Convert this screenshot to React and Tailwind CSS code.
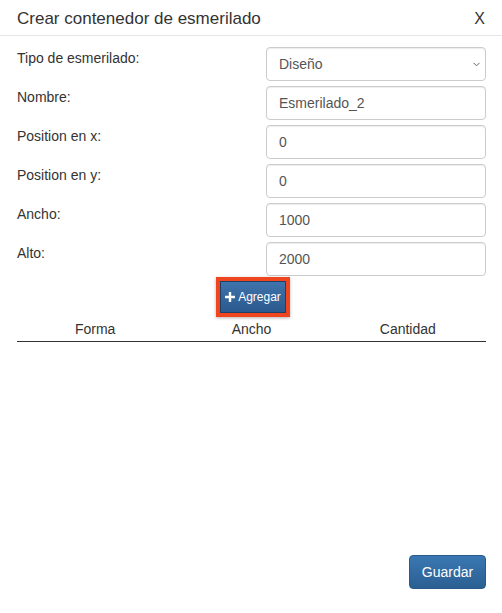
import React from 'react';

const fields = [
  { label: 'Nombre:', value: 'Esmerilado_2' },
  { label: 'Position en x:', value: '0' },
  { label: 'Position en y:', value: '0' },
  { label: 'Ancho:', value: '1000' },
  { label: 'Alto:', value: '2000' },
];

function Row({ label, children }) {
  return (
    <div className="flex items-start justify-between h-[34px]">
      <label className="pt-[1px] text-[14px] leading-[20px] text-[#333]">{label}</label>
      {children}
    </div>
  );
}

export default function App() {
  return (
    <div
      className="h-[613px] w-[502px] bg-white flex flex-col text-[#333]"
      style={{ fontFamily: '"Liberation Sans", Arial, sans-serif' }}
    >
      <div className="flex items-center justify-between h-[36px] pl-[17px] pr-[17px] pt-[2px] border-b border-[#e5e5e5]">
        <h4 className="text-[17px] leading-[25px] text-[#333]">Crear contenedor de esmerilado</h4>
        <button className="text-[16px] leading-[20px] text-[#333]">X</button>
      </div>

      <div className="flex flex-col gap-[5px] pt-[11px] pl-[17px] pr-[16px]">
        <Row label="Tipo de esmerilado:">
          <div className="relative w-[220px] h-[34px] border border-[#ccc] rounded-[4px] bg-white flex items-center px-[12px] shadow-[inset_0_1px_1px_rgba(0,0,0,0.075)]">
            <span className="text-[14px] text-[#555]">Diseño</span>
            <svg className="absolute right-[5px] top-[14px]" width="7" height="5" viewBox="0 0 7 5">
              <path d="M0.5 0.8 L3.5 3.8 L6.5 0.8" fill="none" stroke="#666" strokeWidth="1" />
            </svg>
          </div>
        </Row>
        {fields.map((f) => (
          <Row key={f.label} label={f.label}>
            <div className="w-[220px] h-[34px] border border-[#ccc] rounded-[4px] bg-white flex items-center px-[12px] pt-[1px] shadow-[inset_0_1px_1px_rgba(0,0,0,0.075)]">
              <span className="text-[14px] text-[#555]">{f.value}</span>
            </div>
          </Row>
        ))}
      </div>

      <div className="flex justify-center mt-[1px] pl-[4px]">
        <div className="border-[4px] border-[#f0461f] shadow-[0_1px_3px_rgba(0,0,0,0.3)]">
          <button className="flex items-center gap-[3px] h-[32px] px-[4px] bg-gradient-to-b from-[#3f73ab] to-[#2a5a8e] border border-[#1f3f66] text-white text-[12px]">
            <svg width="10" height="10" viewBox="0 0 10 10">
              <path d="M3.8 0h2.4v3.8H10v2.4H6.2V10H3.8V6.2H0V3.8h3.8z" fill="#fff" />
            </svg>
            <span>Agregar</span>
          </button>
        </div>
      </div>

      <div className="ml-[17px] mr-[16px] mt-[2px] grid grid-cols-3 border-b border-[#333] text-[14px] leading-[20px] pb-[2px]">
        <div className="text-center">Forma</div>
        <div className="text-center">Ancho</div>
        <div className="text-center">Cantidad</div>
      </div>

      <div className="mt-auto flex justify-end pr-[16px] pb-[24px]">
        <button className="w-[77px] h-[34px] rounded-[4px] bg-gradient-to-b from-[#3a78b3] to-[#2b5f92] border border-[#2b5a8a] text-white text-[14px]">
          Guardar
        </button>
      </div>
    </div>
  );
}
